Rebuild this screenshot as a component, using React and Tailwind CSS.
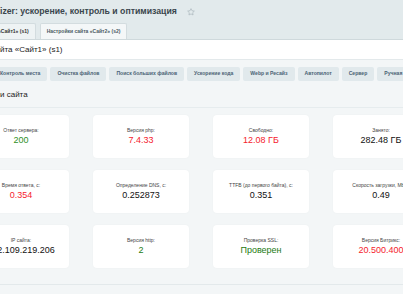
import React from 'react';

const tools = [
  'Контроль места',
  'Очистка файлов',
  'Поиск больших файлов',
  'Ускорение кода',
  'Webp и Ресайз',
  'Автопилот',
  'Сервер',
  'Ручная оптимизация',
];

const green = 'text-[#2f8f1f]';
const red = 'text-[#f5222d]';
const dark = 'text-[#111]';

const stats = [
  { label: 'Ответ сервера:', value: '200', color: green },
  { label: 'Версия php:', value: '7.4.33', color: red },
  { label: 'Свободно:', value: '12.08 ГБ', color: red },
  { label: 'Занято:', value: '282.48 ГБ', color: dark },
  { label: 'Время ответа, с:', value: '0.354', color: red },
  { label: 'Определение DNS, с:', value: '0.252873', color: dark },
  { label: 'TTFB (до первого байта), с:', value: '0.351', color: dark },
  { label: 'Скорость загрузки, Mb/s:', value: '0.49', color: dark },
  { label: 'IP сайта:', value: '212.109.219.206', color: dark },
  { label: 'Версия http:', value: '2', color: 'text-[#1d7a12]' },
  { label: 'Проверка SSL:', value: 'Проверен', color: 'text-[#1d7a12]' },
  { label: 'Версия Битрикс:', value: '20.500.400', color: red },
];

const StatCard = ({ label, value, color }) => (
  <div className="bg-white rounded-[4px] h-[43px] flex flex-col items-center justify-center gap-[2px] pb-[2px] shadow-[0_0_2px_rgba(0,0,0,0.04)]">
    <div className="text-[5px] leading-[6px] text-[#444] whitespace-nowrap">{label}</div>
    <div className={`text-[9px] leading-[10px] whitespace-nowrap ${color}`}>{value}</div>
  </div>
);

const App = () => (
  <div className="w-[403px] h-[294px] overflow-hidden bg-[#f3f6f7] font-['Liberation_Sans',Arial,sans-serif]">
    {/* Header */}
    <div className="bg-[#e2eaec] border-b border-[#cfd9dc]">
      <div className="h-[22px] flex items-center gap-[10px] pt-[1px]">
        <span className="text-[8.7px] font-bold text-[#3a464d] whitespace-nowrap">
          izer: ускорение, контроль и оптимизация
        </span>
        <svg width="8" height="8" viewBox="0 0 24 24" fill="none" stroke="#a7b3b9" strokeWidth="2">
          <path d="M12 2l3.1 6.3 6.9 1-5 4.9 1.2 6.8L12 17.8 5.8 21l1.2-6.8-5-4.9 6.9-1z" />
        </svg>
      </div>
      <div className="h-[17px] flex items-end gap-[4px]">
        <div className="-ml-[52px] h-[16px] px-[6px] flex items-center bg-[#eef3f4] border border-b-0 border-[#d3dcdf] rounded-t-[2px] text-[5px] font-bold text-[#333] whitespace-nowrap">
          Настройки сайта «Сайт1» (s1)
        </div>
        <div className="h-[16px] px-[6px] flex items-center bg-[#f4f7f8] border border-b-0 border-[#d3dcdf] rounded-t-[2px] text-[5px] font-bold text-[#4b5a63] whitespace-nowrap">
          Настройки сайта «Сайт2» (s2)
        </div>
      </div>
    </div>

    {/* Subtitle */}
    <div className="bg-white h-[20px] flex items-center border-b border-[#e3e9eb]">
      <span className="text-[8px] text-[#222] whitespace-nowrap">йта «Сайт1» (s1)</span>
    </div>

    {/* Tools */}
    <div className="border-b border-[#e6ecee]">
      <div className="flex gap-[3px] pt-[7px] -ml-[7px]">
        {tools.map((t) => (
          <div
            key={t}
            className="h-[14px] px-[7px] flex items-center bg-[#e1e9ec] rounded-[2px] text-[5.1px] font-bold text-[#4a6274] whitespace-nowrap shrink-0"
          >
            {t}
          </div>
        ))}
      </div>
      <div className="h-[26px] flex items-center pt-[2px] text-[8px] font-medium text-[#222]">и сайта</div>
    </div>

    {/* Stats */}
    <div className="border-b border-[#e3e9eb] pt-[7px] pb-[16px]">
      <div className="grid grid-cols-[96px_96px_96px_96px] gap-x-[24px] gap-y-[12px] -ml-[27px] w-[460px]">
        {stats.map((s) => (
          <StatCard key={s.label} {...s} />
        ))}
      </div>
    </div>
  </div>
);

export default App;
